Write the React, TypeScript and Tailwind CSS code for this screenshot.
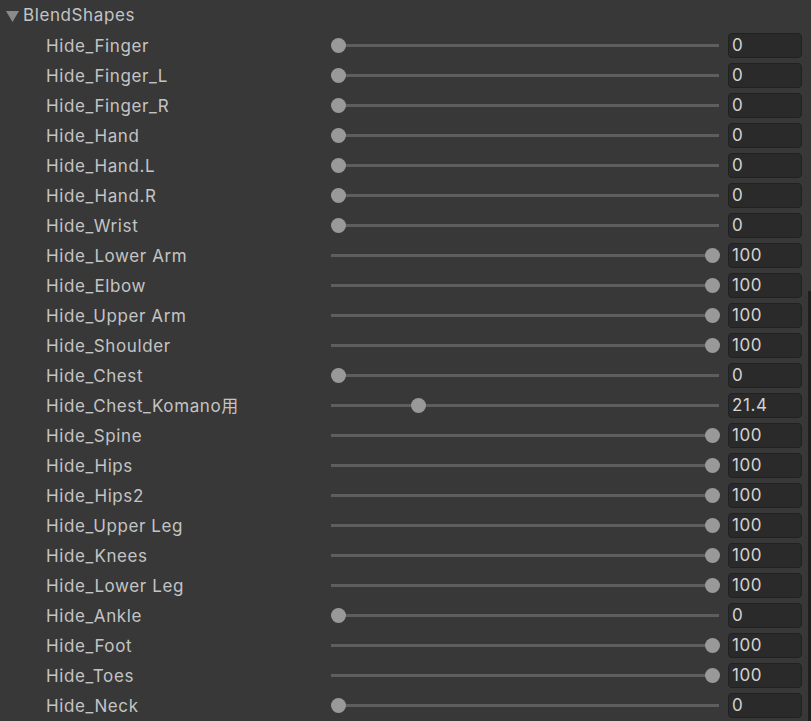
const rows: [string, number, string][] = [
  ['Hide_Finger', 0, '0'],
  ['Hide_Finger_L', 0, '0'],
  ['Hide_Finger_R', 0, '0'],
  ['Hide_Hand', 0, '0'],
  ['Hide_Hand.L', 0, '0'],
  ['Hide_Hand.R', 0, '0'],
  ['Hide_Wrist', 0, '0'],
  ['Hide_Lower Arm', 100, '100'],
  ['Hide_Elbow', 100, '100'],
  ['Hide_Upper Arm', 100, '100'],
  ['Hide_Shoulder', 100, '100'],
  ['Hide_Chest', 0, '0'],
  ['Hide_Chest_Komano用', 21.4, '21.4'],
  ['Hide_Spine', 100, '100'],
  ['Hide_Hips', 100, '100'],
  ['Hide_Hips2', 100, '100'],
  ['Hide_Upper Leg', 100, '100'],
  ['Hide_Knees', 100, '100'],
  ['Hide_Lower Leg', 100, '100'],
  ['Hide_Ankle', 0, '0'],
  ['Hide_Foot', 100, '100'],
  ['Hide_Toes', 100, '100'],
  ['Hide_Neck', 0, '0'],
];

function Slider({ value }: { value: number }) {
  // thumb centre travels from 7px to (width - 7px)
  return (
    <div className="relative h-[30px] w-[388px] shrink-0">
      <div className="absolute left-0 right-0 top-[14px] h-[3px] bg-[#5e5e5e]" />
      <div
        className="absolute top-[8px] h-[15px] w-[15px] rounded-full bg-[#999999]"
        style={{ left: `calc(${value / 100} * (100% - 14px))` }}
      />
    </div>
  );
}

export default function App() {
  return (
    <div
      className="relative h-[721px] w-[811px] overflow-hidden bg-[#383838] text-[17px] tracking-[0.6px] text-[#c4c4c4]"
      style={{ fontFamily: 'Inter, "Noto Sans CJK JP", sans-serif' }}
    >
      <div className="flex h-[30px] items-center pl-[6px] pt-[2px]">
        <svg width="13" height="12" viewBox="0 0 13 12" className="mr-[4px]">
          <path d="M0 1 L13 1 L6.5 12 Z" fill="#8a8a8a" />
        </svg>
        <span>BlendShapes</span>
      </div>

      {rows.map(([name, v, text]) => (
        <div key={name} className="flex h-[30px] items-center">
          <div className="w-[331px] shrink-0 pl-[46px] pt-[2px] leading-none">{name}</div>
          <Slider value={v} />
          <div className="ml-[9px] flex h-[25px] w-[74px] items-center rounded-[4px] border border-[#212121] bg-[#2a2a2a] pl-[3px] pt-[2px] text-[#d2d2d2]">
            {text}
          </div>
        </div>
      ))}

      <div className="absolute right-0 top-[291px] bottom-0 w-[3px] bg-[#1f1f1f]" />
    </div>
  );
}
